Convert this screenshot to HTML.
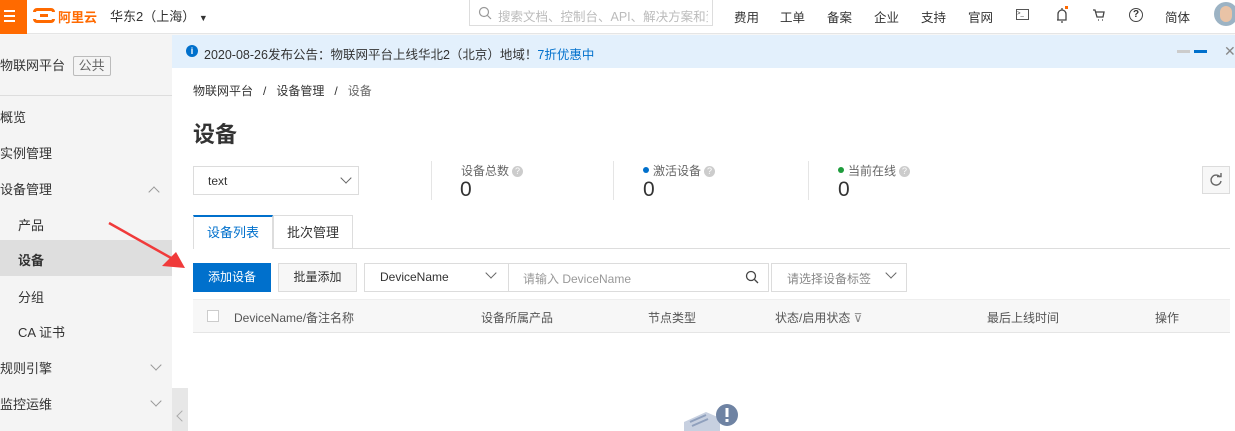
<!DOCTYPE html><html><head><meta charset="utf-8"><style>
*{margin:0;padding:0;box-sizing:border-box}
body{width:1235px;height:431px;overflow:hidden;position:relative;background:#fff;font-family:"Liberation Sans","Noto Sans CJK SC",sans-serif;font-size:12px;color:#333}
.a{position:absolute;white-space:nowrap}
.top{position:absolute;left:0;top:0;width:1235px;height:34px;background:#fff;border-bottom:1px solid #e5e5e5;box-shadow:0 1px 2px rgba(0,0,0,.06)}
.side{position:absolute;left:0;top:35px;width:172px;height:396px;background:#f4f4f4}
.si{position:absolute;left:0;font-size:13px;color:#333}
.chev{position:absolute;width:8px;height:8px;border-right:1.5px solid #999;border-bottom:1.5px solid #999}
.box{position:absolute;border:1px solid #dcdcdc;background:#fff}
.q{display:inline-block;width:11px;height:11px;border-radius:50%;background:#ccc;color:#fff;font-size:9px;line-height:11px;text-align:center;vertical-align:1px;margin-left:3px}
.th{position:absolute;top:309px;font-size:12px;color:#555}
</style></head><body>
<div class="top">
 <div class="a" style="left:0;top:0;width:27px;height:34px;background:#ff6a00"></div>
 <div class="a" style="left:4px;top:10px;width:11px;height:2px;background:#fff;box-shadow:0 5px 0 #fff,0 10px 0 #fff"></div>
 <div class="a" style="left:33px;top:8px;width:22px;height:15px;border:3px solid #ff6a00;border-radius:4px"></div>
 <div class="a" style="left:40px;top:14px;width:8px;height:3px;background:#ff6a00"></div>
 <div class="a" style="left:32px;top:12px;width:4px;height:7px;background:#fff"></div><div class="a" style="left:52px;top:12px;width:4px;height:7px;background:#fff"></div>
 <div class="a" style="left:58px;top:7px;font-size:13px;font-weight:bold;color:#ff6a00">阿里云</div>
 <div class="a" style="left:110px;top:6px;font-size:13px;color:#333">华东2（上海） <span style="font-size:9px">▼</span></div>
 <div class="a" style="left:469px;top:0;width:244px;height:26px;border:1px solid #ddd;border-top:none"></div>
 <svg class="a" style="left:478px;top:6px" width="14" height="14"><circle cx="6" cy="6" r="4.5" stroke="#999" fill="none" stroke-width="1.2"/><path d="M9.5 9.5L13 13" stroke="#999" stroke-width="1.2"/></svg>
 <div class="a" style="left:498px;top:6px;font-size:12.5px;color:#bbb;width:210px;overflow:hidden">搜索文档、控制台、API、解决方案和资源</div>
 <div class="a" style="left:734px;top:7px;font-size:12.5px">费用</div>
 <div class="a" style="left:780px;top:7px;font-size:12.5px">工单</div>
 <div class="a" style="left:827px;top:7px;font-size:12.5px">备案</div>
 <div class="a" style="left:874px;top:7px;font-size:12.5px">企业</div>
 <div class="a" style="left:921px;top:7px;font-size:12.5px">支持</div>
 <div class="a" style="left:968px;top:7px;font-size:12.5px">官网</div>
 <div class="a" style="left:1016px;top:9px;width:13px;height:11px;border:1.3px solid #555;font-size:6px;line-height:8px">&gt;_</div>
 <svg class="a" style="left:1054px;top:6px" width="16" height="18"><path d="M4 14V8a4 4 0 0 1 8 0v6H3M7 16h2M8 4V2" stroke="#444" fill="none" stroke-width="1.3"/><rect x="11" y="0" width="3" height="3" fill="#ff6a00"/></svg>
 <svg class="a" style="left:1092px;top:8px" width="14" height="14"><path d="M1 2h2l2 7h6l1-5H4M6 12h1M10 12h1" stroke="#444" fill="none" stroke-width="1.3"/></svg>
 <div class="a" style="left:1129px;top:8px;width:14px;height:14px;border:1.3px solid #444;border-radius:50%;font-size:10px;line-height:11px;text-align:center;font-weight:bold">?</div>
 <div class="a" style="left:1165px;top:7px;font-size:12.5px">简体</div>
 <div class="a" style="left:1214px;top:2px;width:24px;height:24px;border-radius:50%;background:#9cb3c4"></div>
 <div class="a" style="left:1220px;top:6px;width:12px;height:16px;border-radius:6px;background:#e9c3a6"></div>
</div>
<div class="side">
 <div class="si" style="top:20px">物联网平台 <span style="display:inline-block;border:1px solid #bbb;border-radius:2px;padding:0 5px;color:#666;margin-left:4px;line-height:18px">公共</span></div>
 <div class="a" style="left:0;top:60px;width:172px;height:1px;background:#ddd"></div>
 <div class="si" style="top:72px">概览</div>
 <div class="si" style="top:108px">实例管理</div>
 <div class="si" style="top:144px">设备管理</div>
 <div class="chev" style="left:150px;top:153px;transform:rotate(-135deg)"></div>
 <div class="si" style="left:18px;top:180px">产品</div>
 <div class="a" style="left:0;top:205px;width:172px;height:36px;background:#dedede"></div>
 <div class="si" style="left:18px;top:215px;font-weight:bold">设备</div>
 <div class="si" style="left:18px;top:252px">分组</div>
 <div class="si" style="left:18px;top:287px">CA 证书</div>
 <div class="si" style="top:323px">规则引擎</div>
 <div class="chev" style="left:152px;top:326px;transform:rotate(45deg)"></div>
 <div class="si" style="top:359px">监控运维</div>
 <div class="chev" style="left:152px;top:362px;transform:rotate(45deg)"></div>
</div>
<div class="a" style="left:172px;top:388px;width:16px;height:43px;background:#e7e7e7"></div>
<div class="chev" style="left:178px;top:412px;transform:rotate(135deg);border-color:#aaa"></div>
<div class="a" style="left:172px;top:35px;width:1063px;height:33px;background:#e3f0fc"></div>
<div class="a" style="left:186px;top:45px;width:12px;height:12px;border-radius:50%;background:#0070cc;color:#fff;font-size:9px;font-weight:bold;text-align:center;line-height:12px">i</div>
<div class="a" style="left:204px;top:44px;font-size:12.5px;color:#333">2020-08-26发布公告：物联网平台上线华北2（北京）地域！<span style="color:#0070cc">7折优惠中</span></div>
<div class="a" style="left:1177px;top:50px;width:13px;height:3px;background:#ccc"></div>
<div class="a" style="left:1194px;top:50px;width:13px;height:3px;background:#0070cc"></div>
<div class="a" style="left:1224px;top:43px;font-size:14px;color:#888">✕</div>
<div class="a" style="left:193px;top:82px;font-size:12px;color:#333">物联网平台 &nbsp;&nbsp;/&nbsp;&nbsp; 设备管理 &nbsp;&nbsp;/&nbsp;&nbsp; <span style="color:#666">设备</span></div>
<div class="a" style="left:193px;top:117px;font-size:22px;font-weight:bold;color:#333">设备</div>
<div class="box" style="left:193px;top:166px;width:166px;height:29px"></div>
<div class="a" style="left:208px;top:174px;font-size:12px">text</div>
<div class="chev" style="left:342px;top:174px;transform:rotate(45deg);border-color:#666"></div>
<div class="a" style="left:431px;top:161px;width:1px;height:39px;background:#e5e5e5"></div>
<div class="a" style="left:613px;top:161px;width:1px;height:39px;background:#e5e5e5"></div>
<div class="a" style="left:808px;top:161px;width:1px;height:39px;background:#e5e5e5"></div>
<div class="a" style="left:461px;top:162px;color:#666">设备总数<span class="q">?</span></div>
<div class="a" style="left:460px;top:178px;font-size:21px;color:#333">0</div>
<div class="a" style="left:643px;top:162px;color:#666"><span style="display:inline-block;width:6px;height:6px;border-radius:50%;background:#0070cc;vertical-align:2px;margin-right:4px"></span>激活设备<span class="q">?</span></div>
<div class="a" style="left:643px;top:178px;font-size:21px">0</div>
<div class="a" style="left:838px;top:162px;color:#666"><span style="display:inline-block;width:6px;height:6px;border-radius:50%;background:#1e9c3c;vertical-align:2px;margin-right:4px"></span>当前在线<span class="q">?</span></div>
<div class="a" style="left:838px;top:178px;font-size:21px">0</div>
<div class="box" style="left:1202px;top:166px;width:28px;height:28px;background:#f7f7f7"></div>
<svg class="a" style="left:1209px;top:173px" width="14" height="14"><path d="M11 4A5 5 0 1 0 12 8" stroke="#666" fill="none" stroke-width="1.4"/><path d="M8 3.5h4V0" stroke="#666" fill="none" stroke-width="1.4"/></svg>
<div class="a" style="left:193px;top:248px;width:1037px;height:1px;background:#ddd"></div>
<div class="a" style="left:193px;top:215px;width:80px;height:34px;background:#fff;border:1px solid #ddd;border-top:2px solid #0070cc;border-bottom:none;color:#0070cc;text-align:center;line-height:32px;font-size:13px">设备列表</div>
<div class="a" style="left:273px;top:215px;width:80px;height:33px;border:1px solid #ddd;border-bottom:none;text-align:center;line-height:33px;font-size:13px">批次管理</div>
<div class="a" style="left:193px;top:263px;width:78px;height:29px;background:#0070cc;color:#fff;text-align:center;line-height:29px">添加设备</div>
<div class="box" style="left:278px;top:263px;width:79px;height:29px;background:#f7f7f7;text-align:center;line-height:27px">批量添加</div>
<div class="box" style="left:364px;top:263px;width:145px;height:29px"></div>
<div class="a" style="left:380px;top:270px">DeviceName</div>
<div class="chev" style="left:487px;top:269px;transform:rotate(45deg);border-color:#666"></div>
<div class="box" style="left:508px;top:263px;width:261px;height:29px"></div>
<div class="a" style="left:523px;top:270px;color:#999">请输入 DeviceName</div>
<svg class="a" style="left:745px;top:270px" width="14" height="14"><circle cx="6" cy="6" r="4.5" stroke="#444" fill="none" stroke-width="1.3"/><path d="M9.5 9.5L13 13" stroke="#444" stroke-width="1.3"/></svg>
<div class="box" style="left:771px;top:263px;width:136px;height:29px"></div>
<div class="a" style="left:787px;top:270px;color:#888">请选择设备标签</div>
<div class="chev" style="left:887px;top:269px;transform:rotate(45deg);border-color:#666"></div>
<div class="a" style="left:193px;top:299px;width:1037px;height:34px;background:#f7f7f7;border-top:1px solid #eee;border-bottom:1px solid #e5e5e5"></div>
<div class="a" style="left:207px;top:310px;width:12px;height:12px;border:1px solid #ccc;background:#fff"></div>
<div class="th" style="left:234px">DeviceName/备注名称</div>
<div class="th" style="left:481px">设备所属产品</div>
<div class="th" style="left:648px">节点类型</div>
<div class="th" style="left:775px">状态/启用状态 <span style="color:#888">⊽</span></div>
<div class="th" style="left:987px">最后上线时间</div>
<div class="th" style="left:1155px">操作</div>
<svg class="a" style="left:680px;top:400px" width="60" height="31"><path d="M4 22l22-10 14 6v13H4z" fill="#c7d0e0"/><path d="M10 22l16-7M12 26l16-7" stroke="#8fa0bd" stroke-width="2"/><circle cx="47" cy="15" r="11" fill="#6f83a3"/><rect x="45.5" y="8" width="3" height="9" fill="#fff"/><rect x="45.5" y="19" width="3" height="3" fill="#fff"/></svg>
<svg class="a" style="left:100px;top:215px" width="95" height="65"><path d="M9 8L80 48" stroke="#f03a3a" stroke-width="2.5"/><path d="M85 53L62 51L76 37Z" fill="#f03a3a"/></svg>
</body></html>
